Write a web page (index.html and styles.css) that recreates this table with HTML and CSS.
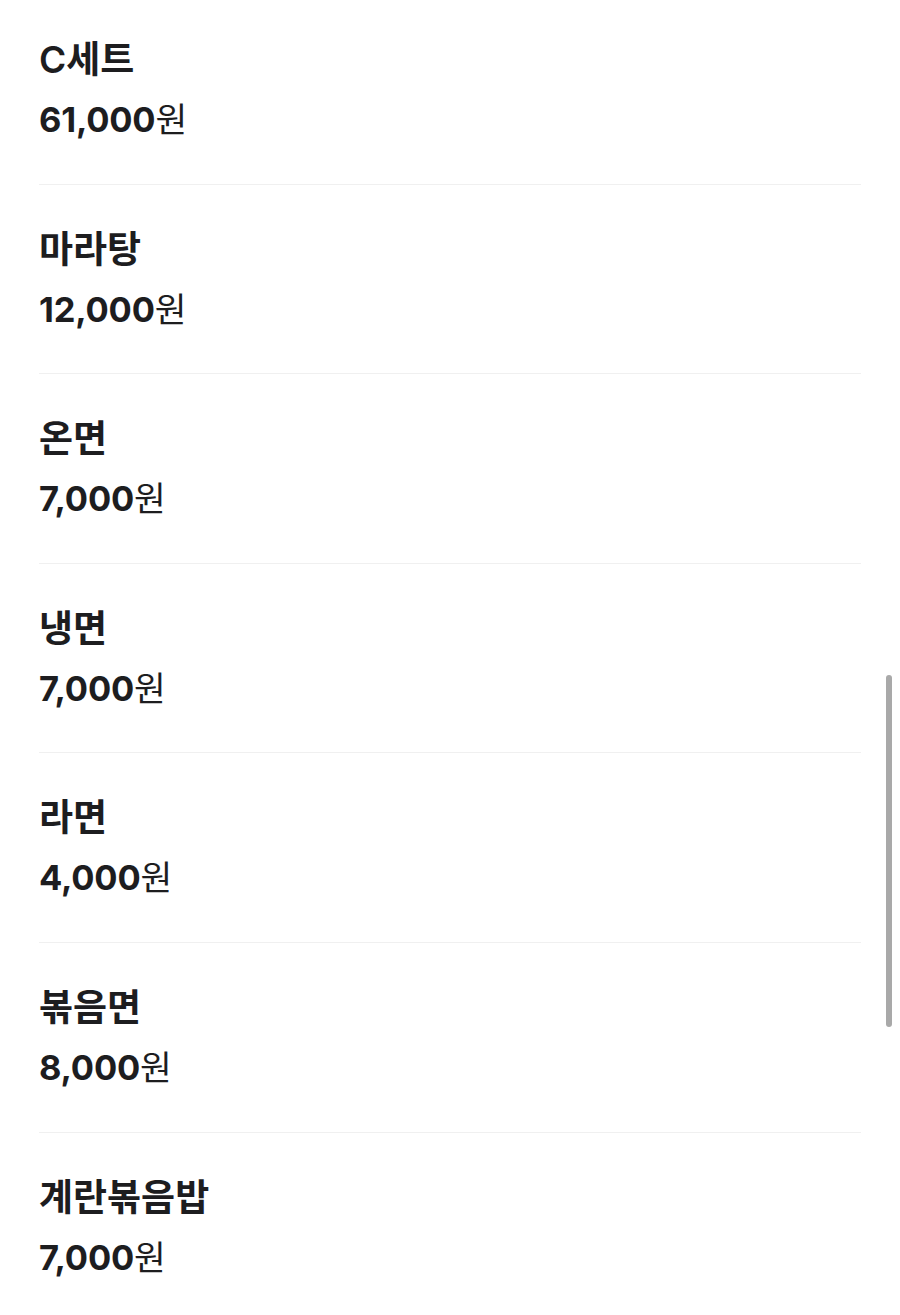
FILE: index.html
```html
<!DOCTYPE html>
<html lang="ko">
<head>
  <meta charset="UTF-8">
  <meta name="viewport" content="width=device-width, initial-scale=1.0">
  <title>메뉴</title>
  <link rel="stylesheet" href="styles.css">
</head>
<body>
  <ul class="menu">
    <li class="item">
      <div class="name">C세트</div>
      <div class="price"><b>61,000</b>원</div>
    </li>
    <li class="item">
      <div class="name">마라탕</div>
      <div class="price"><b>12,000</b>원</div>
    </li>
    <li class="item">
      <div class="name">온면</div>
      <div class="price"><b>7,000</b>원</div>
    </li>
    <li class="item">
      <div class="name">냉면</div>
      <div class="price"><b>7,000</b>원</div>
    </li>
    <li class="item">
      <div class="name">라면</div>
      <div class="price"><b>4,000</b>원</div>
    </li>
    <li class="item">
      <div class="name">볶음면</div>
      <div class="price"><b>8,000</b>원</div>
    </li>
    <li class="item">
      <div class="name">계란볶음밥</div>
      <div class="price"><b>7,000</b>원</div>
    </li>
  </ul>
  <div class="scrollbar"></div>
</body>
</html>
```

FILE: styles.css
```css
:root {
  --text: #1d1d1f;
  --line: #f0f0f0;
  --thumb: #a9a9a9;
}

* {
  margin: 0;
  padding: 0;
  box-sizing: border-box;
}

body {
  background: #fff;
  color: var(--text);
  font-family: Inter, "Noto Sans CJK KR", sans-serif;
  overflow: hidden;
}

.menu {
  list-style: none;
  margin: -5px 39px 0 39px;
}

.item {
  padding: 40px 0 38.6px;
  border-bottom: 1px solid var(--line);
}

.name {
  font-size: 37px;
  font-weight: 600;
  line-height: 50px;
}

.price {
  margin-top: 10px;
  font-size: 34.5px;
  font-weight: 400;
  line-height: 50px;
}

.price b {
  font-weight: 700;
  letter-spacing: -0.2px;
}

.scrollbar {
  position: fixed;
  top: 675px;
  left: 886px;
  width: 6px;
  height: 352px;
  border-radius: 3px;
  background: var(--thumb);
}
```
